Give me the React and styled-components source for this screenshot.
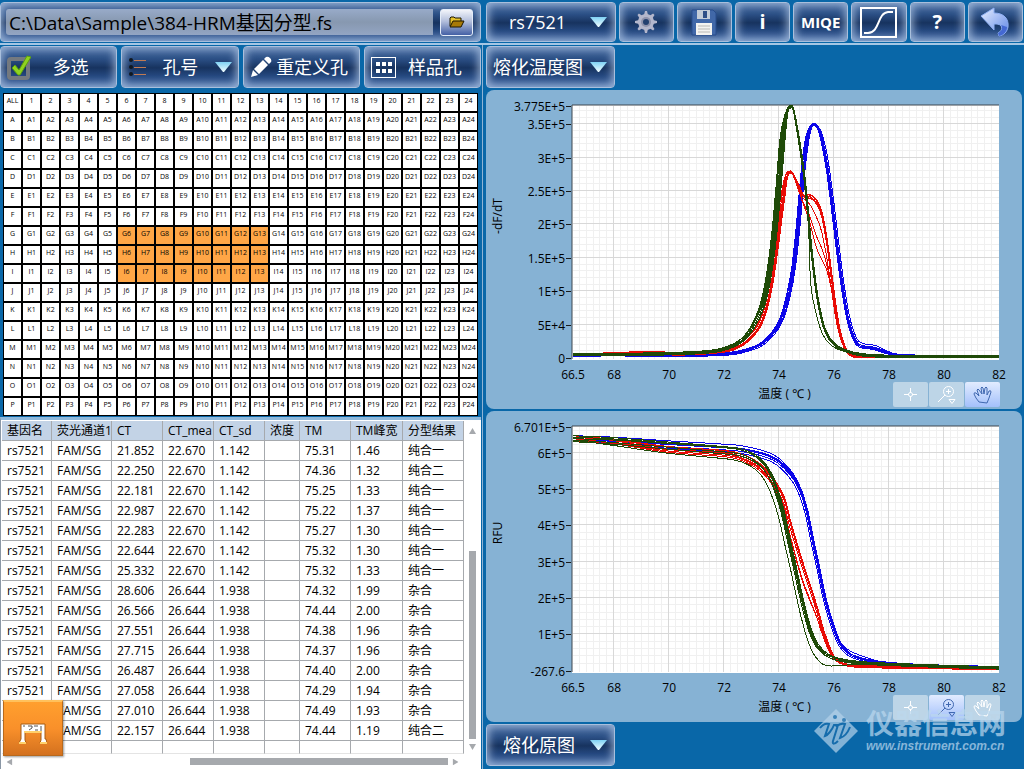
import React, { useState } from "react"
import styled, { createGlobalStyle, css } from "styled-components"

/* ---------- data ---------- */

const ROW_NAMES = "ABCDEFGHIJKLMNOP".split("")
const COL_NUMBERS = Array.from({ length: 24 }, (_, i) => i + 1)

const HEADERS = [
  ["基因名", 50],
  ["荧光通道1", 60],
  ["CT", 51],
  ["CT_mea", 51],
  ["CT_sd", 51],
  ["浓度", 35],
  ["TM", 51],
  ["TM峰宽", 52],
  ["分型结果", 61],
]

// CT, CT_mean, CT_sd, TM, TM width, genotype
const RESULTS = [
  ["21.852", "22.670", "1.142", "75.31", "1.46", "纯合一"],
  ["22.250", "22.670", "1.142", "74.36", "1.32", "纯合二"],
  ["22.181", "22.670", "1.142", "75.25", "1.33", "纯合一"],
  ["22.987", "22.670", "1.142", "75.22", "1.37", "纯合一"],
  ["22.283", "22.670", "1.142", "75.27", "1.30", "纯合一"],
  ["22.644", "22.670", "1.142", "75.32", "1.30", "纯合一"],
  ["25.332", "22.670", "1.142", "75.32", "1.33", "纯合一"],
  ["28.606", "26.644", "1.938", "74.32", "1.99", "杂合"],
  ["26.566", "26.644", "1.938", "74.44", "2.00", "杂合"],
  ["27.551", "26.644", "1.938", "74.38", "1.96", "杂合"],
  ["27.715", "26.644", "1.938", "74.37", "1.96", "杂合"],
  ["26.487", "26.644", "1.938", "74.40", "2.00", "杂合"],
  ["27.058", "26.644", "1.938", "74.29", "1.94", "杂合"],
  ["27.010", "26.644", "1.938", "74.49", "1.93", "杂合"],
  ["22.157", "26.644", "1.938", "74.44", "1.19", "纯合二"],
]

const RED = "#e80c06"
const GREEN = "#1f4a08"
const BLUE = "#0c06e8"

// every curve is a list of [temperature, value / 1e5]
const peakGreen = [
  [66.5, 0.05], [68, 0.05], [69.5, 0.06], [71, 0.08], [71.87, 0.12], [72.6, 0.245],
  [73.08, 0.47], [73.45, 0.82], [73.69, 1.3], [73.87, 1.87], [74.03, 2.6],
  [74.17, 3.3], [74.29, 3.67], [74.42, 3.765], [74.54, 3.69], [74.72, 3.27],
  [74.9, 2.77], [75.05, 2.17], [75.2, 1.52], [75.39, 0.92], [75.63, 0.47],
  [75.93, 0.245], [76.36, 0.12], [77.08, 0.045], [78.66, 0.02], [82, 0.02],
]
const peakRed = [
  [66.5, 0.05], [68, 0.06], [69.5, 0.085], [70.3, 0.06], [71.87, 0.1], [72.6, 0.19],
  [73.2, 0.42], [73.5, 0.69], [73.75, 1.16], [73.93, 1.66], [74.05, 2.05],
  [74.17, 2.42], [74.29, 2.73], [74.42, 2.785], [74.54, 2.735], [74.72, 2.57],
  [74.88, 2.44], [75.02, 2.42], [75.17, 2.43], [75.39, 2.34], [75.57, 2.14],
  [75.75, 1.72], [75.93, 1.17], [76.11, 0.62], [76.3, 0.27], [76.54, 0.07],
  [77, 0.025], [79, 0.02], [82, 0.02],
]
const peakBlue = [
  [66.5, 0.04], [68, 0.05], [70, 0.04], [71.87, 0.055], [72.6, 0.095], [73.3, 0.195],
  [73.8, 0.38], [74.11, 0.6], [74.36, 0.96], [74.54, 1.36], [74.68, 1.87],
  [74.8, 2.42], [74.92, 2.95], [75.05, 3.32], [75.17, 3.475], [75.29, 3.495],
  [75.45, 3.42], [75.63, 3.12], [75.77, 2.77], [75.93, 2.27], [76.09, 1.72],
  [76.26, 1.17], [76.48, 0.62], [76.72, 0.295], [76.96, 0.18], [77.45, 0.145],
  [77.93, 0.085], [78.66, 0.03], [82, 0.02],
]
const meltGreen = [
  [66.5, 6.38], [68, 6.33], [70, 6.22], [72, 6.1], [72.6, 6.04], [73.08, 5.89],
  [73.45, 5.65], [73.75, 5.27], [73.99, 4.76], [74.17, 4.26], [74.35, 3.62],
  [74.54, 2.98], [74.72, 2.34], [74.9, 1.74], [75.14, 1.1], [75.39, 0.69],
  [75.75, 0.43], [76.23, 0.3], [77.2, 0.21], [79.4, 0.14], [82, 0.08],
]
const meltRed = [
  [66.5, 6.38], [68, 6.3], [70, 6.13], [72, 6.03], [72.6, 5.94], [73.2, 5.72],
  [73.69, 5.36], [74.17, 4.75], [74.41, 4.07], [74.66, 3.43], [74.9, 2.84],
  [75.14, 2.29], [75.39, 1.69], [75.63, 1.05], [75.93, 0.46], [76.23, 0.23],
  [76.84, 0.13], [79.4, 0.09], [82, 0.07],
]
const meltBlue = [
  [66.5, 6.38], [68, 6.34], [70, 6.24], [72, 6.15], [72.6, 6.11], [73.3, 6],
  [73.8, 5.86], [74.17, 5.65], [74.54, 5.31], [74.78, 4.95], [75.02, 4.35],
  [75.2, 3.66], [75.45, 2.79], [75.69, 1.92], [76, 1.145], [76.23, 0.73],
  [76.6, 0.44], [77.2, 0.29], [78.05, 0.2], [79.4, 0.14], [82, 0.09],
]

const bump = (t, center, width) => Math.exp(-(((t - center) / width) ** 2))

// shift the rising and the falling side of a peak on their own
const skew = (points, top, rise, fall) =>
  points.map(([t, v]) => {
    const flank = t < 67 || t > 81 ? 0 : 1
    const side = t < top ? rise : fall
    const near = Math.min(1, Math.abs(t - top) / 0.25)
    return [t + side * near * flank, v]
  })

const dip = (points, depth) =>
  points.map(([t, v]) => [t, v * (1 - depth * bump(t, 75.5, 0.45))])

// replicate of a melt curve: moved along the temperature axis and lowered
const replicate = (points, shift, drop) =>
  points.map(([t, v]) => [
    t < 67 || t > 81 ? t : t + shift,
    v - drop * Math.min(1, Math.max(0, (t - 66.5) / 4)) * Math.min(1, v / 6),
  ])

// small vertical difference between neighbouring replicates
const scatter = (series, amount) =>
  series.map(([color, points], i) => {
    const k = ((i * 7) % 5) / 2 - 1
    return [color, points.map(([t, v]) => [t, v + amount(v) * k])]
  })

const peakSeries = scatter(
  [
    ...[-0.05, -0.03, 0, 0.02, 0.05, 0.07].map((d) => [
      BLUE,
      skew(peakBlue, 75.29, -d, d * 0.6),
    ]),
    [
      BLUE,
      skew(peakBlue, 75.29, -0.08, 0.08).map(([t, v]) => [t, v + 0.05 * bump(t, 77.3, 0.5)]),
    ],
    ...[
      [0, -0.06], [0.01, -0.03], [0.02, 0], [0.02, 0.02],
      [0, 0.04], [0.1, -0.1], [0.23, 0], [0.32, 0.03],
    ].map(([depth, d]) => [RED, skew(dip(peakRed, depth), 74.42, d, d / 2 - depth / 8)]),
    ...[-0.14, -0.1, -0.04, -0.02, 0, 0.02, 0.05].map((d) => [
      GREEN,
      skew(peakGreen, 74.42, d, Math.max(-0.02, d / 2)),
    ]),
    [
      GREEN,
      skew(peakGreen, 74.42, -0.06, 0).map(([t, v]) =>
        t > 75.1 && t < 77.2 ? [t - 0.05, v * 0.72] : [t, v]
      ),
    ],
  ],
  () => 0.018
)

const meltSeries = scatter(
  [
    ...[[-0.05, 0.05], [-0.02, 0.02], [0, 0], [0.02, -0.02], [0.04, 0.04]].map(
      ([s, d]) => [BLUE, replicate(meltBlue, s, d)]
    ),
    [BLUE, meltBlue.map(([t, v]) => [t, v + 0.14 * bump(t, 76.8, 0.8)])],
    ...[[-0.04, 0.1], [-0.02, 0.05], [0, 0], [0.02, 0.02], [0.03, -0.03]].map(
      ([s, d]) => [RED, replicate(meltRed, s, d)]
    ),
    ...[0.1, 0.14].map((k) => [
      RED,
      replicate(meltRed, -0.05, 0.14).map(([t, v]) => [t, v * (1 - k * bump(t, 75, 0.6))]),
    ]),
    ...[
      [-0.05, 0.04], [-0.02, 0], [0, 0.06], [0.02, -0.03], [0.04, 0.02],
    ].map(([s, d]) => [GREEN, replicate(meltGreen, s, d)]),
    [
      GREEN,
      replicate(meltGreen, -0.14, 0.22).map(([t, v]) =>
        t > 74.5 && t < 77 ? [t, v * (1 - 0.6 * bump(t, 75.8, 0.6))] : [t, v]
      ),
    ],
  ],
  (v) => 0.03 + 0.008 * v
)

/* ---------- icons ---------- */

const CheckIcon = () => (
  <svg width="24" height="26" viewBox="0 0 24 26" aria-hidden="true">
    <rect x="2" y="5" width="19" height="19" rx="2" fill="none" stroke="#74797f" strokeWidth="4" />
    <path d="M5 14l3-3 4 5L20 2l4 1-11 18h-2z" fill="#8fd320" stroke="#5da10c" />
  </svg>
)

const ListIcon = () => (
  <svg width="18" height="20" viewBox="0 0 18 20" aria-hidden="true">
    {[3, 10, 17].map((y) => (
      <g key={y}>
        <circle cx="3" cy={y} r="2" fill="#111820" />
        <path d={`M6 ${y + 0.5}h12`} stroke="#c07a52" />
      </g>
    ))}
  </svg>
)

const PencilIcon = () => (
  <svg width="22" height="22" viewBox="0 0 22 22" fill="#fff" aria-hidden="true">
    <path d="M1 21l2-7 5 5zM4 13L13 4l5 5-9 9zM14 3l2-2q2-1 4 1t1 4l-2 2z" />
  </svg>
)

const PlateIcon = () => (
  <svg width="25" height="21" viewBox="0 0 25 21" aria-hidden="true">
    <rect x="0.5" y="0.5" width="24" height="20" fill="none" stroke="#fff" />
    {[5, 12].map((y) =>
      [5, 11, 17].map((x) => <rect key={`${x}-${y}`} x={x} y={y} width="4" height="4" fill="#fff" />)
    )}
  </svg>
)

const FolderIcon = () => (
  <svg width="16" height="12" viewBox="0 0 16 12" aria-hidden="true">
    <path d="M1 10V2l1-1h3l1 1h6v3" fill="#e6c22c" stroke="#1c1600" />
    <path d="M1 11l3-6h11l-3 6z" fill="#a87a08" stroke="#1c1600" />
  </svg>
)

const ArrowDown = () => (
  <svg width="17" height="11" viewBox="0 0 17 11" aria-hidden="true">
    <defs>
      <linearGradient id="arrow" x1="0" x2="0" y1="0" y2="1">
        <stop offset="0" stopColor="#7fd2f4" />
        <stop offset="1" stopColor="#f2fdff" />
      </linearGradient>
    </defs>
    <path d="M0 0h17L9 10H8z" fill="url(#arrow)" />
  </svg>
)

const GearIcon = () => (
  <svg width="24" height="24" viewBox="0 0 24 24" aria-hidden="true">
    <g fill="#b4b7cc">
      {[0, 45, 90, 135].map((a) => (
        <path key={a} d="M10 5l1-4h2l1 4v14l-1 4h-2l-1-4z" transform={`rotate(${a} 12 12)`} />
      ))}
      <circle cx="12" cy="12" r="8" />
    </g>
    <circle cx="12" cy="12" r="5" fill="#8f93ac" />
    <circle cx="12" cy="12" r="3" fill="#24406f" />
  </svg>
)

const SaveIcon = () => (
  <svg width="26" height="27" viewBox="0 0 26 27" aria-hidden="true">
    <path d="M1 1h21l3 3v22H1z" fill="#4168a8" stroke="#284d8b" />
    <rect x="6" y="1" width="13" height="9" fill="#c3ccd8" />
    <rect x="12" y="2" width="4" height="7" fill="#2f4f86" />
    <rect x="5" y="14" width="16" height="12" fill="#f3f3f0" />
    <path d="M7 17h12M7 20h12M7 23h12" stroke="#b9b9b5" />
  </svg>
)

const CurveIcon = () => (
  <svg width="37" height="31" viewBox="0 0 37 31" fill="none" stroke="#fff" aria-hidden="true">
    <rect x="1" y="1" width="35" height="29" strokeWidth="2" />
    <path d="M4 26h4c12 0 9-20 20-21h5" strokeWidth="2" />
  </svg>
)

const BackIcon = () => (
  <svg width="30" height="30" viewBox="0 0 30 30" aria-hidden="true">
    <defs>
      <linearGradient id="back" x1="0" x2="1" y1="0" y2="1">
        <stop offset="0" stopColor="#e6eeff" />
        <stop offset="1" stopColor="#5d86e6" />
      </linearGradient>
    </defs>
    <path
      d="M1 9L14 1v5c10 0 15 6 14 14-1 5-4 8-9 9l-1-3c6-3 5-10-4-9v6z"
      fill="url(#back)"
      stroke="#8fb0f4"
    />
    <path d="M18 26c4-2 5-5 3-8l6 2c0 4-3 8-8 9z" fill="#4468d2" />
  </svg>
)

const CrossIcon = () => (
  <svg width="13" height="15" viewBox="0 0 13 15" fill="none" stroke="currentColor" aria-hidden="true">
    <path d="M6.5 1v5M6.5 9v5M0 7.5h5M8 7.5h5" />
    <circle cx="6.5" cy="7.5" r="2" />
  </svg>
)

const ZoomIcon = () => (
  <svg width="20" height="20" viewBox="0 0 20 20" fill="none" stroke="currentColor" aria-hidden="true">
    <circle cx="11.5" cy="6.5" r="5" />
    <path d="M9 6.5h5M11.5 4v5M8 10l-7 7M12 14.5h6l-3 4z" />
  </svg>
)

const HandIcon = () => (
  <svg width="20" height="18" viewBox="0 0 20 18" fill="none" stroke="currentColor" aria-hidden="true">
    <path d="M6 16L3 12 1 8q0-2 2-1l3 3L4 4q1-2 2 0l3 4-1-6q1-2 2 0l1 6 1-6q1-2 2 0v7l2-4q2-1 2 1l-2 6-2 5z" />
  </svg>
)

/* ---------- chart ---------- */

const LEFT = 87
const RIGHT = 513

// catmull-rom spline through the scaled points
const toPath = (points, sx, sy) => {
  const p = points.map(([t, v]) => [sx(t), sy(v)])
  let d = `M${p[0][0].toFixed(1)} ${p[0][1].toFixed(1)}`
  for (let i = 0; i < p.length - 1; i++) {
    const a = p[Math.max(0, i - 1)]
    const b = p[i]
    const c = p[i + 1]
    const e = p[Math.min(p.length - 1, i + 2)]
    const nums = [
      b[0] + (c[0] - a[0]) / 6, b[1] + (c[1] - a[1]) / 6,
      c[0] - (e[0] - b[0]) / 6, c[1] - (e[1] - b[1]) / 6,
      c[0], c[1],
    ]
    d += `C${nums.map((n) => n.toFixed(1)).join(" ")}`
  }
  return d
}

const range = (from, to, step) => {
  const list = []
  for (let i = 0; from + i * step <= to + 0.0001; i++) list.push(from + i * step)
  return list
}

const Chart = ({ height, top, bottom, max, min, minor, ticks, label, series }) => {
  const sx = (t) => LEFT + ((t - 66.5) / 15.5) * (RIGHT - LEFT)
  const sy = (v) => bottom - ((v - min) / (max - min)) * (bottom - top)
  const snap = (n) => Math.round(n) + 0.5
  const middle = (top + bottom) / 2 - 16
  return (
    <Plot viewBox={`0 0 536 ${height}`} role="img" aria-label={label}>
      <rect x={LEFT - 1} y={top - 1} width={RIGHT - LEFT + 1} height={bottom - top + 3} fill="#fff" />
      <g stroke="#f0f0f0">
        {range(66.75, 81.75, 0.25).map((t) => (
          <path key={t} d={`M${snap(sx(t) - 1)} ${top}V${bottom + 1}`} />
        ))}
        {range(minor, max, minor).map((v) => (
          <path key={v} d={`M${LEFT} ${snap(sy(v) - 1)}H${RIGHT}`} />
        ))}
      </g>
      <g stroke="#d8d8d8">
        {range(68, 80, 2).map((t) => (
          <path key={t} d={`M${snap(sx(t) - 1)} ${top}V${bottom + 1}`} />
        ))}
        {ticks.slice(1, -1).map(([v]) => (
          <path key={v} d={`M${LEFT} ${snap(sy(v) - 1)}H${RIGHT}`} />
        ))}
      </g>
      <path d={`M${LEFT - 1} ${bottom + 1}V${top - 1}H${RIGHT}`} fill="none" stroke="#3f474e" />
      <g fill="none" shapeRendering="crispEdges">
        {series.map(([color, points], i) => (
          <path key={i} d={toPath(points, sx, sy)} stroke={color} />
        ))}
      </g>
      {ticks.map(([v, text]) => (
        <g key={text}>
          <path d={`M80 ${snap(sy(v))}h5`} stroke="#1a1a1a" />
          <text x="79" y={Math.round(sy(v)) + 5} textAnchor="end">{text}</text>
        </g>
      ))}
      {[66.5, 68, 70, 72, 74, 76, 78, 80, 82].map((t) => (
        <text key={t} x={sx(t)} y={bottom + 21} textAnchor="middle">{t}</text>
      ))}
      <text transform={`translate(16 ${middle}) rotate(-90)`} textAnchor="middle">{label}</text>
    </Plot>
  )
}

const ChartPanel = ({ tool, ...chart }) => {
  const [active, setActive] = useState(tool)
  const tools = [
    ["cursor", CrossIcon],
    ["zoom", ZoomIcon],
    ["pan", HandIcon],
  ]
  return (
    <Panel>
      <Chart {...chart} />
      <PanelFooter>
        <AxisTitle>温度 ( ℃ )</AxisTitle>
        <Tools>
          {tools.map(([name, Icon]) => (
            <Tool key={name} aria-label={name} $active={active === name} onClick={() => setActive(name)}>
              <Icon />
            </Tool>
          ))}
        </Tools>
      </PanelFooter>
    </Panel>
  )
}

/* ---------- left side ---------- */

const isSelected = (row, col) => "GHI".includes(row) && col >= 6 && col <= 13

const Wells = () => (
  <WellTable>
    <thead>
      <tr>
        <Well as="th">ALL</Well>
        {COL_NUMBERS.map((n) => (
          <Well as="th" key={n}>{n}</Well>
        ))}
      </tr>
    </thead>
    <tbody>
      {ROW_NAMES.map((row) => (
        <tr key={row}>
          <Well as="th">{row}</Well>
          {COL_NUMBERS.map((n) => (
            <Well key={n} $selected={isSelected(row, n)}>{row}{n}</Well>
          ))}
        </tr>
      ))}
    </tbody>
  </WellTable>
)

const Results = () => (
  <ResultsFrame>
    <ResultsBody>
      <ResultTable>
        <colgroup>
          {HEADERS.map(([name, width]) => (
            <col key={name} width={width} />
          ))}
        </colgroup>
        <thead>
          <tr>
            {HEADERS.map(([name]) => (
              <th key={name}>{name}</th>
            ))}
          </tr>
        </thead>
        <tbody>
          {RESULTS.map(([ct, mean, sd, tm, width, type], i) => (
            <tr key={i}>
              <td>rs7521</td>
              <td>FAM/SG</td>
              <td>{ct}</td>
              <td>{mean}</td>
              <td>{sd}</td>
              <td />
              <td>{tm}</td>
              <td>{width}</td>
              <td>{type}</td>
            </tr>
          ))}
          <BlankRow>
            {HEADERS.map(([name]) => (
              <td key={name} />
            ))}
          </BlankRow>
        </tbody>
      </ResultTable>
      <VerticalScroll>
        <Caret $dir="up" />
        <VerticalThumb />
        <Caret $dir="down" />
      </VerticalScroll>
    </ResultsBody>
    <HorizontalScroll>
      <Caret $dir="left" />
      <HorizontalThumb />
      <Caret $dir="right" />
    </HorizontalScroll>
    <HomeButton aria-label="home">
      <svg width="28" height="22" viewBox="0 0 28 22" aria-hidden="true">
        <path d="M2 1h24v15h1l1 4h-7l1-3V9H6v8l1 3H0l2-4z" fill="#fff" stroke="#a85c12" />
        <path d="M5 9h18M0 20h7M21 20h7" stroke="#ffd06a" strokeWidth="2" />
        <path d="M4 3h2M9 3h4v2l-3 2M15 3h4M16 7h3M22 3v5" stroke="#555" fill="none" />
      </svg>
    </HomeButton>
  </ResultsFrame>
)

const App = () => {
  const [path, setPath] = useState("C:\\Data\\Sample\\384-HRM基因分型.fs")
  return (
    <Page>
      <GlobalStyle />
      <TopBar>
        <PathBar>
          <PathInput aria-label="file" value={path} onChange={(e) => setPath(e.target.value)} />
          <OpenButton aria-label="open"><FolderIcon /></OpenButton>
        </PathBar>
        <Toolbar>
          <GlassButton $spread>rs7521<ArrowDown /></GlassButton>
          <GlassButton aria-label="settings"><GearIcon /></GlassButton>
          <GlassButton aria-label="save"><SaveIcon /></GlassButton>
          <GlassButton $bold>i</GlassButton>
          <GlassButton $bold $small>MIQE</GlassButton>
          <GlassButton aria-label="curve"><CurveIcon /></GlassButton>
          <GlassButton $bold>?</GlassButton>
          <GlassButton aria-label="back"><BackIcon /></GlassButton>
        </Toolbar>
      </TopBar>
      <Main>
        <Side>
          <Actions>
            <GlassButton $icon><CheckIcon /><span>多选</span></GlassButton>
            <GlassButton $icon><ListIcon /><span>孔号</span><ArrowDown /></GlassButton>
            <GlassButton $icon><PencilIcon /><span>重定义孔</span></GlassButton>
            <GlassButton $icon><PlateIcon /><span>样品孔</span></GlassButton>
          </Actions>
          <Wells />
          <Results />
        </Side>
        <Charts>
          <ChartSelect $tight>熔化温度图<ArrowDown /></ChartSelect>
          <ChartPanel
            tool="pan"
            label="-dF/dT"
            height={292}
            top={16}
            bottom={268}
            min={0}
            max={3.775}
            minor={0.1}
            ticks={[
              [0, "0"], [0.5, "5E+4"], [1, "1E+5"], [1.5, "1.5E+5"], [2, "2E+5"],
              [2.5, "2.5E+5"], [3, "3E+5"], [3.5, "3.5E+5"], [3.775, "3.775E+5"],
            ]}
            series={peakSeries}
          />
          <ChartPanel
            tool="zoom"
            label="RFU"
            height={284}
            top={16}
            bottom={260}
            min={-0.003}
            max={6.701}
            minor={0.2}
            ticks={[
              [-0.003, "-267.6"], [1, "1E+5"], [2, "2E+5"], [3, "3E+5"],
              [4, "4E+5"], [5, "5E+5"], [6, "6E+5"], [6.701, "6.701E+5"],
            ]}
            series={meltSeries}
          />
          <ChartSelect>熔化原图<ArrowDown /></ChartSelect>
        </Charts>
      </Main>
      <Watermark>
        <svg width="46" height="46" viewBox="0 0 46 46" aria-hidden="true">
          <path d="M23 1L45 23 23 45 1 23z" fill="#b4d2ea" />
          <path
            d="M7 20c3-4 6-5 9-4l-4 12c3-1 7-6 9-11h4l-5 16c-1 4 2 3 5 0M23 19c3-3 6-4 9-3l-5 14c4-1 8-6 10-11"
            fill="none"
            stroke="#1b6fae"
            strokeWidth="2"
          />
          <circle cx="22" cy="9" r="2" fill="#1b6fae" />
          <circle cx="31" cy="12" r="2" fill="#1b6fae" />
        </svg>
        <div>
          <strong>仪器信息网</strong>
          <em>www.instrument.com.cn</em>
        </div>
      </Watermark>
    </Page>
  )
}

/* ---------- styles ---------- */

const GlobalStyle = createGlobalStyle`
  * {
    box-sizing: border-box;
  }

  body {
    margin: 0;
    background: #0967a8;
    color: #000;
    font-family: "Open Sans", "Noto Sans", "Noto Sans CJK SC", sans-serif;
    font-size: 12px;
  }

  button,
  input {
    font-family: inherit;
  }
`

const Page = styled.div`
  position: relative;
  display: flex;
  flex-direction: column;
  min-height: 100vh;
  overflow: hidden;
`

const columns = css`
  display: grid;
  grid-template-columns: minmax(0, 484fr) minmax(0, 540fr);
`

const TopBar = styled.header`
  ${columns}
  padding: 2px 0 1px;
  border-bottom: 2px solid #a5c6e4;
`

const glass = css`
  border: 1px solid #a9bfdc;
  border-radius: 4px;
  background: linear-gradient(#456a9f 0%, #2b4f85 30%, #17335f 52%, #25487f 72%, #4369a3 100%);
  box-shadow: inset 0 0 8px 2px rgba(184, 205, 235, 0.75);
`

const PathBar = styled.div`
  ${glass}
  display: flex;
  align-items: center;
  gap: 7px;
  height: 40px;
  margin-right: 3px;
  padding: 0 7px 0 5px;
`

const PathInput = styled.input`
  flex: 1;
  min-width: 0;
  height: 26px;
  padding: 0 3px;
  border: 0;
  border-radius: 3px 0 0 3px;
  background: linear-gradient(#98abc9, #8798b0 50%, #93a5c3);
  color: #000;
  font-size: 19px;
`

const OpenButton = styled.button`
  display: flex;
  align-items: center;
  justify-content: center;
  width: 33px;
  height: 27px;
  padding: 0;
  border: 1px solid #e4ecf8;
  border-radius: 3px;
  background: linear-gradient(#f2f4fa, #b3bfdc 45%, #4460a5);
`

const Toolbar = styled.div`
  display: grid;
  grid-template-columns: 129fr repeat(7, 55fr);
  gap: 3px;
  height: 40px;
  padding: 0 1px 0 2px;
`

const GlassButton = styled.button`
  ${glass}
  display: flex;
  align-items: center;
  justify-content: center;
  min-width: 0;
  height: 100%;
  padding: 0;
  color: #fff;
  font-size: ${(p) => (p.$small ? 15 : p.$bold ? 20 : 18)}px;
  font-weight: ${(p) => (p.$bold ? 700 : 400)};
  line-height: 24px;
  white-space: nowrap;
  cursor: pointer;

  ${(p) =>
    p.$spread &&
    css`
      justify-content: space-between;
      padding: 0 8px 0 22px;
    `}

  ${(p) =>
    p.$icon &&
    css`
      justify-content: flex-start;
      padding: 0 6px;

      span {
        flex: 1;
        text-align: center;
      }
    `}
`

const Main = styled.main`
  ${columns}
  flex: 1;
`

const Side = styled.section`
  display: flex;
  flex-direction: column;
  margin-right: 1px;
  padding: 1px 1px 0 0;
  border-right: 1px solid #8fb3d4;
`

const Actions = styled.div`
  display: grid;
  grid-template-columns: repeat(4, 1fr);
  gap: 4px;
  height: 42px;
`

const WellTable = styled.table`
  width: calc(100% - 6px);
  margin: 5px 3px 0;
  border-spacing: 0;
  border: 0;
  table-layout: fixed;
  background: #000;
`

const Well = styled.td`
  height: 19px;
  padding: 0 0 3px;
  border: 1px solid #000;
  background: ${(p) => (p.$selected ? "#ffa646" : "#fff")};
  font-size: 7px;
  font-weight: 500;
  line-height: 12px;
  text-align: center;
  white-space: nowrap;
`

const ResultsFrame = styled.div`
  position: relative;
  flex: 1;
  margin-top: 1px;
  padding: 1px 0 0 1px;
  border-top: 3px solid #8fb9dc;
  border-left: 1px solid #8a97a5;
  background: #fff;
`

const ResultsBody = styled.div`
  display: grid;
  grid-template-columns: minmax(0, 1fr) 17px;
`

const ResultTable = styled.table`
  width: 100%;
  border-spacing: 0;
  table-layout: fixed;

  th,
  td {
    height: 20px;
    padding: 0 0 0 5px;
    overflow: hidden;
    border-right: 1px solid #a6a9ad;
    border-bottom: 1px solid #a6a9ad;
    font-size: 12px;
    font-weight: 400;
    line-height: 18px;
    text-align: left;
    white-space: nowrap;
  }

  th {
    background: #c3d3e6;
  }
`

const BlankRow = styled.tr`
  && td {
    height: 13px;
    border-bottom-color: #e4e4e4;
  }
`

const VerticalScroll = styled.div`
  display: flex;
  flex-direction: column;
  align-items: center;
  padding: 7px 0 4px;
`

const VerticalThumb = styled.div`
  width: 7px;
  height: 188px;
  margin: auto 0 5px;
  background: #a6a9ad;
`

const HorizontalScroll = styled.div`
  display: flex;
  align-items: center;
  height: 15px;
  padding: 0 22px 0 4px;
`

const HorizontalThumb = styled.div`
  width: 57%;
  height: 7px;
  margin: 0 4px 0 auto;
  background: #a6a9ad;
`

const ANGLES = { up: 0, right: 90, down: 180, left: 270 }

const Caret = styled.i`
  width: 7px;
  height: 6px;
  background: #a6a9ad;
  clip-path: polygon(50% 0, 100% 100%, 0 100%);
  rotate: ${(p) => ANGLES[p.$dir]}deg;
`

// floats above the table
const HomeButton = styled.button`
  position: absolute;
  left: 2px;
  bottom: 13px;
  display: flex;
  align-items: center;
  justify-content: center;
  width: 60px;
  height: 56px;
  padding: 10px 0 0;
  border: 1px solid #b8691c;
  border-top: 2px solid #ffc15c;
  background: linear-gradient(#ff9f2e, #f9902a 50%, #d3711f);
  box-shadow: 1px 1px 2px rgba(0, 0, 0, 0.4);
`

const Charts = styled.section`
  display: flex;
  flex-direction: column;
  gap: 2px;
  min-width: 0;
  padding: 1px 2px 3px;
`

const ChartSelect = styled(GlassButton)`
  justify-content: space-between;
  align-self: flex-start;
  width: 129px;
  height: 42px;
  padding: 0 7px 0 ${(p) => (p.$tight ? 6 : 16)}px;
`

const Panel = styled.div`
  padding-bottom: 2px;
  border-radius: 8px;
  background: #86b2d4;
`

const Plot = styled.svg`
  display: block;
  width: 100%;
  height: auto;

  text {
    font-size: 12px;
    fill: #000;
  }
`

const PanelFooter = styled.div`
  display: grid;
  grid-template-columns: 1fr auto 1fr;
  height: 25px;
  padding: 0 22px 0 83px;
`

const AxisTitle = styled.div`
  grid-column: 2;
  line-height: 23px;
`

const Tools = styled.div`
  display: flex;
  gap: 1px;
  justify-content: flex-end;
`

const Tool = styled.button`
  display: flex;
  align-items: center;
  justify-content: center;
  width: 35px;
  height: 25px;
  padding: 0;
  border: 0;
  border-radius: 2px;
  background: ${(p) => (p.$active ? "linear-gradient(#e2ecff, #a3c0fb)" : "#bdd5e7")};
  color: ${(p) => (p.$active ? "#4068b0" : "#fff")};
`

// laid over the lower right corner of the page
const Watermark = styled.div`
  position: absolute;
  right: 18px;
  bottom: 15px;
  display: flex;
  align-items: center;
  gap: 7px;
  opacity: 0.7;
  color: #bcd8ee;
  pointer-events: none;

  strong,
  em {
    display: block;
  }

  strong {
    font-size: 28px;
    line-height: 30px;
  }

  em {
    font-family: "Liberation Sans", sans-serif;
    font-size: 12px;
    font-weight: 700;
    line-height: 16px;
  }
`

export default App
